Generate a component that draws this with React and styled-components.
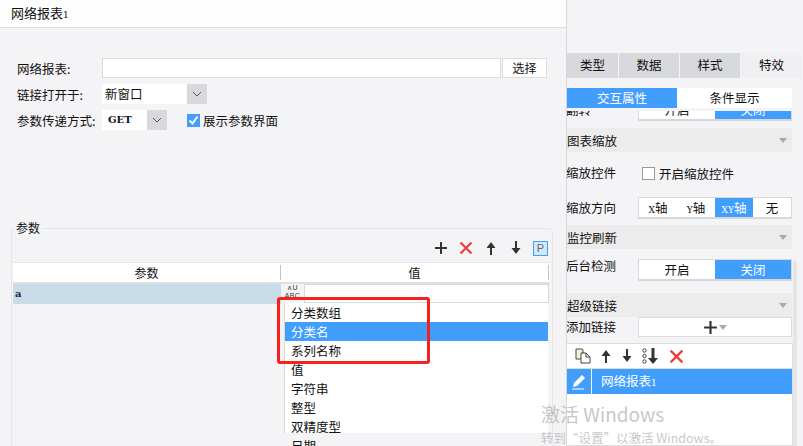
import React from "react";
import styled, { createGlobalStyle } from "styled-components";

const Global = createGlobalStyle`
  html, body { margin: 0; padding: 0; overflow: hidden; }
  body { font-family: "Noto Sans CJK SC", "Noto Sans", sans-serif; font-size: 12px; color: #111; }
  * { box-sizing: border-box; }
`;
const BLUE = "#419efc";
const Page = styled.div`position: relative; display: flex; width: 803px; height: 446px; overflow: hidden; background: #f4f4f6;`;
const Dialog = styled.div`display: flex; flex-direction: column; width: 566px; height: 100%;`;
const Title = styled.div`height: 28px; padding: 0 11px; line-height: 26px; font-size: 13px; background: #fdfdfd; border-bottom: 1px solid #dcdcdc; flex: none;`;
const Form = styled.div`display: flex; flex-direction: column; gap: 6px; padding: 30px 0 0 17px; flex: none;`;
const FormRow = styled.div`display: flex; align-items: center; height: 20px;`;
const Label = styled.div`width: 85px; flex: none; font-size: 12.5px; white-space: nowrap;`;
const TextInput = styled.div`width: 399px; height: 20px; background: #fff; border: 1px solid #dcdcde;`;
const PickButton = styled.div`width: 45px; height: 20px; margin-left: 1px; background: #fff; border: 1px solid #dcdcde; text-align: center; line-height: 18px;`;
const Select = styled.div`display: flex; width: ${p => p.$w}px; height: 20px; background: #fff; font-size: 12.5px; line-height: 19px; padding-left: ${p => p.$pad}px; font-family: ${p => p.$latin ? '"DejaVu Serif", serif' : "inherit"}; font-weight: ${p => p.$latin ? 700 : 400}; overflow: hidden;`;
const SelectText = styled.span`flex: 1; font-size: ${p => p.$latin ? "10px" : "inherit"};`;
const SelectArrow = styled.span`display: flex; align-items: center; justify-content: center; width: 20px; flex: none; background: #d8d9dd;`;
const CheckLabel = styled.div`display: flex; align-items: center; gap: 3px; margin-left: 20px; font-size: 12.5px;`;
const CheckOn = styled.span`display: flex; align-items: center; justify-content: center; width: 13px; height: 13px; background: ${BLUE};`;
const Params = styled.div`position: relative; display: flex; flex-direction: column; flex: 1; margin: 98px 13px 0 11px; border: 1px solid #e6e6e8; border-bottom: none; border-radius: 5px 5px 0 0; padding: 0 2px 0 1px; min-height: 0;`;
const Legend = styled.div`position: absolute; left: 3px; top: -8px; padding: 0 2px 0 1px; background: #f4f4f6; line-height: 14px;`;
const ParamTools = styled.div`display: flex; justify-content: flex-end; align-items: center; gap: 9px; height: 33px; padding: 5px 2px 0 0; flex: none;`;
const Tool = styled.span`display: flex; align-items: center; justify-content: center; width: 16px; height: 16px;`;
const PBox = styled.span`display: flex; align-items: center; justify-content: center; width: 15px; height: 15px; background: #d4e8fb; border: 1px solid ${BLUE}; color: #667; font-size: 11px; line-height: 1; font-family: "Liberation Sans", sans-serif;`;
const TableHead = styled.div`display: flex; height: 22px; background: #fff; border-top: 1px solid #e8e8e8; border-bottom: 2px solid #e0e0e0; flex: none;`;
const HeadCell = styled.div`width: ${p => p.$w}px; text-align: center; line-height: 19px; border-right: 1px solid #c4c4b8; height: 15px; margin-top: 2px; line-height: 15px;`;
const TableRow = styled.div`position: relative; display: flex; height: 20px; flex: none;`;
const NameCell = styled.div`width: 268px; height: 20px; background: #c8dbe9; border-bottom: 1px solid #d8d8d8; padding-left: 2px; font: 700 10px/20px "DejaVu Serif", serif; color: #223;`;
const FormulaIcon = styled.div`width: 23px; height: 20px; overflow: hidden; background: #f4f4f6; font: 7px/8px "Liberation Sans", sans-serif; text-align: center; color: #333; letter-spacing: 0.3px;`;
const ValueInput = styled.div`width: 245px; height: 19px; background: #fff; border: 1px solid #d8d8d8;`;
const Dropdown = styled.div`position: absolute; left: 271px; top: 19px; width: 264px; height: 130px; background: #fff; border-left: 1px solid #d8d8d8; padding-top: 0;`;
const Option = styled.div`height: 19px; padding-left: 6px; font-size: 12.5px; line-height: 19px; background: ${p => p.$on ? BLUE : "transparent"}; color: ${p => p.$on ? "#fff" : "#111"};`;
const RedBox = styled.div`position: absolute; left: 264px; top: 13px; width: 153px; height: 67px; border: 3px solid #f5221c; border-radius: 3px;`;
const Side = styled.div`position: relative; width: 237px; height: 100%; border-left: 1px solid #d8d8dc; overflow: hidden; display: flex; flex-direction: column; padding-top: 53px;`;
const Tabs = styled.div`display: flex; gap: 1px; height: 25px; flex: none;`;
const TabItem = styled.div`width: ${p => p.$w}px; background: ${p => p.$on ? "#f0f0f2" : "#d8d9dd"}; text-align: center; line-height: 24px; font-size: 12.5px;`;
const SubTabs = styled.div`display: flex; width: 225px; height: 20px; margin-top: 10px; background: #fff; flex: none;`;
const SubTab = styled.div`width: ${p => p.$w}px; background: ${p => p.$on ? BLUE : "transparent"}; color: ${p => p.$on ? "#fff" : "#111"}; text-align: center; line-height: 20px; font-size: 12.5px;`;
const Clip = styled.div`display: flex; align-items: flex-end; width: 225px; height: 10px; margin-top: 3px; overflow: hidden; flex: none;`;
const Section = styled.div`display: flex; align-items: center; justify-content: space-between; width: 225px; height: ${p => p.$h || 24}px; margin-top: ${p => p.$top}px; background: #ececec; padding-right: 5px; flex: none; font-size: 12.5px;`;
const Tri = styled.span`width: 0; height: 0; border: 4px solid transparent; border-top: 5px solid #aaa; border-bottom: none;`;
const SideRow = styled.div`display: flex; align-items: ${p => p.$start ? "flex-start" : "center"}; width: 226px; height: ${p => p.$h || 22}px; margin-top: ${p => p.$top || 0}px; flex: none;`;
const SideLabel = styled.div`width: 72px; margin-left: -1px; flex: none; font-size: 12.5px; white-space: nowrap; line-height: ${p => p.$lh || 16}px;`;
const Segs = styled.div`display: flex; width: 154px; height: 22px; flex: none; background: #fff; border: 1px solid #d8d8dc; border-bottom-width: 2px;`;
const Seg = styled.div`flex: 1; width: ${p => p.$w}px; flex: none; text-align: center; font-size: 12.5px; line-height: 19px; background: ${p => p.$on ? BLUE : "transparent"}; color: ${p => p.$on ? "#fff" : "#111"}; white-space: nowrap;`;
const Latin = styled.span`font-family: "DejaVu Serif", serif; font-size: 9px;`;
const Box = styled.span`width: 13px; height: 13px; border: 1px solid #999; background: #fff; margin: 0 4px 0 4px; flex: none;`;
const CheckText = styled.span`font-size: 12.5px;`;
const AddBtn = styled.div`display: flex; align-items: center; justify-content: center; gap: 1px; width: 154px; height: 20px; background: #fff; border: 1px solid #dcdcde;`;
const LinkList = styled.div`width: 226px; flex: 1; margin-top: 6px; background: #fff; border: 1px solid #dcdcde; border-left: none;`;
const LinkTools = styled.div`display: flex; align-items: center; height: 25px; padding-left: 8px; gap: 9px; border-bottom: 1px solid #dcdcde;`;
const LinkRow = styled.div`display: flex; height: 25px; background: ${BLUE}; color: #fff; font-size: 12.5px; line-height: 24px;`;
const PenCell = styled.div`display: flex; align-items: center; justify-content: center; width: 25px; border-right: 1px solid #fff;`;
const LinkName = styled.div`padding-left: 9px;`;
const Num = styled.span`font-family: "DejaVu Serif", serif; font-size: 9px;`;
const Scroll = styled.div`position: absolute; left: 793px; top: 261px; width: 4px; height: 185px; background: #e6e6e8;`;
const Watermark = styled.div`position: absolute; left: 541px; top: 401px; color: rgba(150,150,150,.55); pointer-events: none; white-space: nowrap;`;
const WmBig = styled.div`font-size: 19px; line-height: 26px; font-family: "Noto Sans CJK SC", sans-serif;`;
const WmSmall = styled.div`font-size: 12.5px; line-height: 18px; margin-top: 2px;`;

const Chevron = () => <svg width="10" height="6" viewBox="0 0 10 6"><path d="M1 1l4 4 4-4" fill="none" stroke="#555" strokeWidth="1" /></svg>;
const Plus = ({ s = 14 }) => <svg width={s} height={s} viewBox="0 0 14 14"><path d="M7 1v12M1 7h12" stroke="#333" strokeWidth="2" /></svg>;
const Cross = ({ s = 14 }) => <svg width={s} height={s} viewBox="0 0 14 14"><path d="M1.5 1.5l11 11M12.5 1.5l-11 11" stroke="#ee4040" strokeWidth="2.2" /></svg>;
const Up = () => <svg width="12" height="14" viewBox="0 0 12 14"><path d="M6 1L1.5 7H5v7h2V7h3.5z" fill="#333" /></svg>;
const Down = () => <svg width="12" height="14" viewBox="0 0 12 14"><path d="M6 13L1.5 7H5V0h2v7h3.5z" fill="#333" /></svg>;
const Copy = () => <svg width="16" height="16" viewBox="0 0 16 16"><path d="M1 1h6l1 1v9H1z" fill="#f6f0dd" stroke="#444" /><path d="M6 5h5l4 4v6H6z" fill="#fff" stroke="#444" /><path d="M11 5v4h4" fill="none" stroke="#444" /></svg>;
const ListDown = () => <svg width="18" height="16" viewBox="0 0 18 16"><circle cx="2.5" cy="2.5" r="1.7" fill="none" stroke="#444" /><circle cx="2.5" cy="8" r="1.7" fill="none" stroke="#444" /><circle cx="2.5" cy="13.5" r="1.7" fill="none" stroke="#444" /><path d="M11 16L6 10h3.5V0h3v10H16z" fill="#333" /></svg>;
const Pen = () => <svg width="16" height="16" viewBox="0 0 16 16"><path d="M11 1l3 3-8 8-4 1 1-4z" fill="#fff" /><path d="M1 15h12" stroke="#fff" /></svg>;
const Tick = () => <svg width="11" height="11" viewBox="0 0 11 11"><path d="M1.5 5.5l3 3 5-7" fill="none" stroke="#fff" strokeWidth="2" /></svg>;

export default function App() {
  return (
    <Page>
      <Global />
      <Dialog>
        <Title>网络报表<Num>1</Num></Title>
        <Form>
          <FormRow><Label>网络报表:</Label><TextInput /><PickButton>选择</PickButton></FormRow>
          <FormRow><Label>链接打开于:</Label><Select $w={105} $pad={3}><SelectText>新窗口</SelectText><SelectArrow><Chevron /></SelectArrow></Select></FormRow>
          <FormRow><Label>参数传递方式:</Label><Select $w={65} $pad={6} $latin><SelectText $latin>GET</SelectText><SelectArrow><Chevron /></SelectArrow></Select>
            <CheckLabel><CheckOn><Tick /></CheckOn>展示参数界面</CheckLabel></FormRow>
        </Form>
        <Params>
          <Legend>参数</Legend>
          <ParamTools>
            <Tool><Plus /></Tool><Tool><Cross /></Tool><Tool><Up /></Tool><Tool><Down /></Tool><PBox>P</PBox>
          </ParamTools>
          <TableHead><HeadCell $w={268}>参数</HeadCell><HeadCell $w={268}>值</HeadCell></TableHead>
          <TableRow>
            <NameCell>a</NameCell>
            <FormulaIcon>∧U<br />ABC</FormulaIcon>
            <ValueInput />
            <Dropdown>
              <Option>分类数组</Option>
              <Option $on>分类名</Option>
              <Option>系列名称</Option>
              <Option>值</Option>
              <Option>字符串</Option>
              <Option>整型</Option>
              <Option>双精度型</Option>
              <Option>日期</Option>
            </Dropdown>
            <RedBox />
          </TableRow>
        </Params>
      </Dialog>
      <Side>
        <Tabs>
          <TabItem $w={51}>类型</TabItem><TabItem $w={60}>数据</TabItem><TabItem $w={60}>样式</TabItem><TabItem $w={61} $on>特效</TabItem>
        </Tabs>
        <SubTabs><SubTab $w={110} $on>交互属性</SubTab><SubTab $w={115}>条件显示</SubTab></SubTabs>
        <Clip>
          <SideRow>
            <SideLabel>翻转</SideLabel>
            <Segs><Seg $w={76}>开启</Seg><Seg $w={76} $on>关闭</Seg></Segs>
          </SideRow>
        </Clip>
        <Section $top={7}>图表缩放<Tri /></Section>
        <SideRow $h={14} $top={14}><SideLabel>缩放控件</SideLabel><Box /><CheckText>开启缩放控件</CheckText></SideRow>
        <SideRow $top={17}><SideLabel>缩放方向</SideLabel>
          <Segs><Seg $w={38}><Latin>X</Latin>轴</Seg><Seg $w={38}><Latin>Y</Latin>轴</Seg><Seg $w={38} $on><Latin>XY</Latin>轴</Seg><Seg $w={38}>无</Seg></Segs>
        </SideRow>
        <Section $top={6}>监控刷新<Tri /></Section>
        <SideRow $top={10} $start><SideLabel $lh={14}>后台检测</SideLabel><Segs><Seg $w={76}>开启</Seg><Seg $w={76} $on>关闭</Seg></Segs></SideRow>
        <Section $top={12}>超级链接<Tri /></Section>
        <SideRow $h={20}><SideLabel>添加链接</SideLabel><AddBtn><Plus s={15} /><Tri /></AddBtn></SideRow>
        <LinkList>
          <LinkTools><Copy /><Up /><Down /><ListDown /><Cross s={15} /></LinkTools>
          <LinkRow><PenCell><Pen /></PenCell><LinkName>网络报表<Num>1</Num></LinkName></LinkRow>
        </LinkList>
      </Side>
      <Scroll />
      <Watermark>
        <WmBig>激活 Windows</WmBig>
        <WmSmall>转到“设置”以激活 Windows。</WmSmall>
      </Watermark>
    </Page>
  );
}
